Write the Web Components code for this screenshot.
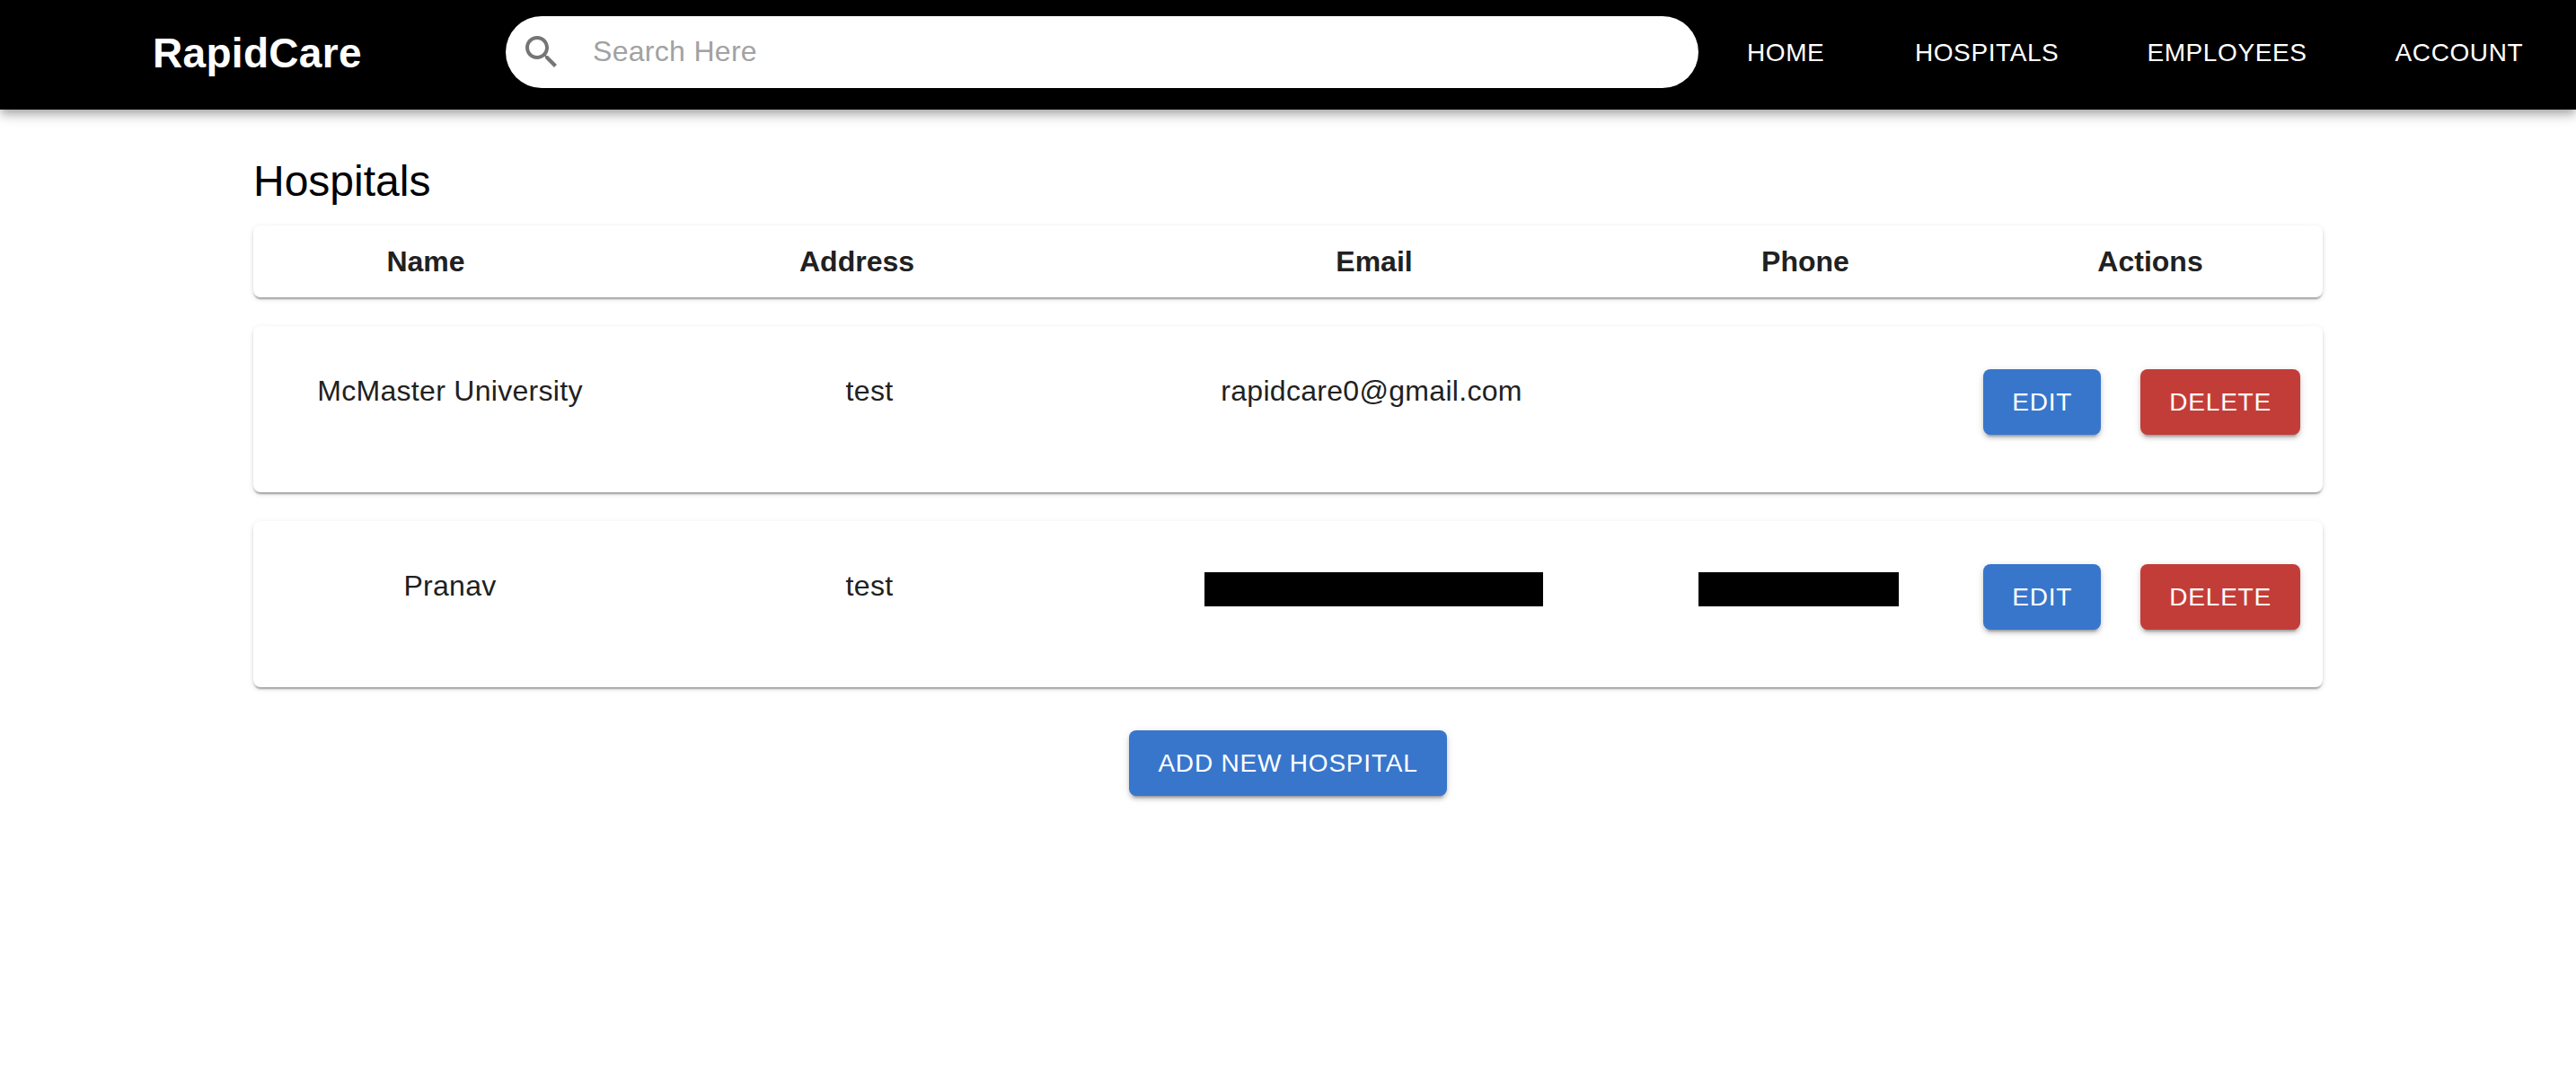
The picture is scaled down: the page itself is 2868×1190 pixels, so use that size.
<!DOCTYPE html>
<html lang="en">
<head>
<meta charset="utf-8">
<title>RapidCare</title>
<style>
  html, body { margin: 0; background: #fff; }
  body { font-family: "Liberation Sans", Arial, sans-serif; color: #000; height: 1190px; overflow: hidden; }
</style>
</head>
<body>
<rc-app-bar>
  <rc-nav-link slot="nav">HOME</rc-nav-link>
  <rc-nav-link slot="nav">HOSPITALS</rc-nav-link>
  <rc-nav-link slot="nav">EMPLOYEES</rc-nav-link>
  <rc-nav-link slot="nav">ACCOUNT</rc-nav-link>
</rc-app-bar>
<rc-hospitals-page>
  <rc-table-header></rc-table-header>
  <rc-hospital-row name="McMaster University" address="test" email="rapidcare0@gmail.com"></rc-hospital-row>
  <rc-hospital-row name="Pranav" address="test">
    <rc-redacted slot="email" style="--w:377px"></rc-redacted>
    <rc-redacted slot="phone" style="--w:223px"></rc-redacted>
  </rc-hospital-row>
  <rc-button slot="footer" color="primary">ADD NEW HOSPITAL</rc-button>
</rc-hospitals-page>

<script>
// shared card look, header and rows use the same paper
const PAPER = `
  background: #fff;
  border-radius: 8px;
  box-shadow: 0 4px 2px -2px rgba(0,0,0,.2), 0 2px 2px 0 rgba(0,0,0,.14), 0 2px 6px 0 rgba(0,0,0,.12);
`;

class RcAppBar extends HTMLElement {
  constructor() {
    super();
    this.attachShadow({ mode: 'open' }).innerHTML = `
      <style>
        :host {
          display: flex;
          align-items: flex-start;
          height: 122px;
          box-sizing: border-box;
          padding-left: 170px;
          background: #000;
          color: #fff;
          position: relative;
          box-shadow: 0 4px 8px -2px rgba(0,0,0,.2), 0 8px 10px 0 rgba(0,0,0,.14), 0 2px 20px 0 rgba(0,0,0,.12);
        }
        .logo {
          width: 393px;
          margin-top: 31px;
          font-size: 46px;
          line-height: 56px;
          font-weight: 700;
          letter-spacing: .3px;
        }
        nav {
          display: flex;
          margin-left: 54px;
          margin-top: 37px;
          gap: 98px;
        }
        ::slotted(:first-child) { margin-right: 2.5px; }
      </style>
      <div class="logo">RapidCare</div>
      <rc-search></rc-search>
      <nav><slot name="nav"></slot></nav>
    `;
  }
}

class RcNavLink extends HTMLElement {
  constructor() {
    super();
    this.attachShadow({ mode: 'open' }).innerHTML = `
      <style>
        :host {
          display: block;
          font-size: 28px;
          line-height: 44px;
          letter-spacing: .6px;
          color: #fff;
          white-space: nowrap;
        }
      </style>
      <slot></slot>
    `;
  }
}

class RcSearch extends HTMLElement {
  constructor() {
    super();
    this.attachShadow({ mode: 'open' }).innerHTML = `
      <style>
        :host {
          display: flex;
          align-items: center;
          width: 1328px;
          height: 80px;
          margin-top: 18px;
          padding-left: 16px;
          box-sizing: border-box;
          border-radius: 40px;
          background: #fff;
        }
        svg { width: 48px; height: 48px; fill: #757575; flex: none; }
        input {
          flex: 1;
          min-width: 0;
          margin-left: 33px;
          border: 0;
          padding: 0 0 2px;
          outline: 0;
          background: none;
          font: 32px "Liberation Sans", Arial, sans-serif;
          letter-spacing: .3px;
          color: #212121;
        }
        input::placeholder { color: #a2a2a2; opacity: 1; }
      </style>
      <svg viewBox="0 0 24 24"><path d="M15.5 14h-.79l-.28-.27C15.41 12.59 16 11.11 16 9.5 16 5.91 13.09 3 9.5 3S3 5.91 3 9.5 5.91 16 9.5 16c1.61 0 3.09-.59 4.23-1.57l.27.28v.79l5 4.99L20.49 19l-4.99-5zm-6 0C7.01 14 5 11.99 5 9.5S7.01 5 9.5 5 14 7.01 14 9.5 11.99 14 9.5 14z"/></svg>
      <input type="text" placeholder="Search Here">
    `;
  }
}

class RcHospitalsPage extends HTMLElement {
  constructor() {
    super();
    this.attachShadow({ mode: 'open' }).innerHTML = `
      <style>
        :host {
          display: block;
          width: 2304px;
          margin: 0 auto;
        }
        h1 {
          margin: 52px 0 21px;
          font-size: 48px;
          line-height: 56px;
          font-weight: 400;
          color: #000;
        }
        .list { display: flex; flex-direction: column; gap: 32px; }
        .footer { display: flex; justify-content: center; margin-top: 48px; }
      </style>
      <h1>Hospitals</h1>
      <div class="list"><slot></slot></div>
      <div class="footer"><slot name="footer"></slot></div>
    `;
  }
}

class RcTableHeader extends HTMLElement {
  constructor() {
    super();
    const cols = ['Name', 'Address', 'Email', 'Phone', 'Actions'];
    this.attachShadow({ mode: 'open' }).innerHTML = `
      <style>
        :host {
          display: grid;
          grid-template-columns: 2fr 3fr 3fr 2fr 2fr;
          align-items: center;
          height: 80px;
          ${PAPER}
          font-size: 32px;
          font-weight: 700;
          color: #212121;
          text-align: center;
        }
      </style>
      ${cols.map(c => `<div>${c}</div>`).join('')}
    `;
  }
}

class RcHospitalRow extends HTMLElement {
  constructor() {
    super();
    const name = this.getAttribute('name') || '';
    const address = this.getAttribute('address') || '';
    const email = this.getAttribute('email') || '';
    const phone = this.getAttribute('phone') || '';
    this.attachShadow({ mode: 'open' }).innerHTML = `
      <style>
        :host {
          display: grid;
          grid-template-columns: 374px 560px 562px 384px 1fr;
          align-items: start;
          height: 185px;
          box-sizing: border-box;
          padding: 48px 25px 0 32px;
          ${PAPER}
          font-size: 32px;
          line-height: 48px;
          letter-spacing: .3px;
          color: #212121;
          text-align: center;
        }
        .cell { min-height: 48px; display: flex; justify-content: center; }
        .mail { margin-right: 4px; }
        .actions {
          display: flex;
          justify-content: flex-end;
          gap: 44px;
        }
      </style>
      <div class="cell">${name}</div>
      <div class="cell">${address}</div>
      <div class="cell"><slot name="email"><span class="mail">${email}</span></slot></div>
      <div class="cell"><slot name="phone">${phone}</slot></div>
      <div class="actions">
        <rc-button color="primary">EDIT</rc-button>
        <rc-button color="error">DELETE</rc-button>
      </div>
    `;
  }
}

class RcRedacted extends HTMLElement {
  constructor() {
    super();
    this.attachShadow({ mode: 'open' }).innerHTML = `
      <style>
        :host {
          display: block;
          width: var(--w, 200px);
          height: 38px;
          margin-top: 9px;
          background: #000;
        }
      </style>
    `;
  }
}

class RcButton extends HTMLElement {
  constructor() {
    super();
    this.attachShadow({ mode: 'open' }).innerHTML = `
      <style>
        :host {
          display: inline-block;
          padding: 12px 32px;
          border-radius: 8px;
          font-size: 28px;
          line-height: 49px;
          letter-spacing: .8px;
          color: #fff;
          white-space: nowrap;
          background: #3876cc;
          box-shadow: 0 6px 2px -4px rgba(0,0,0,.2), 0 4px 4px 0 rgba(0,0,0,.14), 0 2px 10px 0 rgba(0,0,0,.12);
        }
        :host([color="error"]) { background: #c33d38; }
      </style>
      <slot></slot>
    `;
  }
}

customElements.define('rc-app-bar', RcAppBar);
customElements.define('rc-nav-link', RcNavLink);
customElements.define('rc-search', RcSearch);
customElements.define('rc-hospitals-page', RcHospitalsPage);
customElements.define('rc-table-header', RcTableHeader);
customElements.define('rc-hospital-row', RcHospitalRow);
customElements.define('rc-redacted', RcRedacted);
customElements.define('rc-button', RcButton);
</script>
</body>
</html>
